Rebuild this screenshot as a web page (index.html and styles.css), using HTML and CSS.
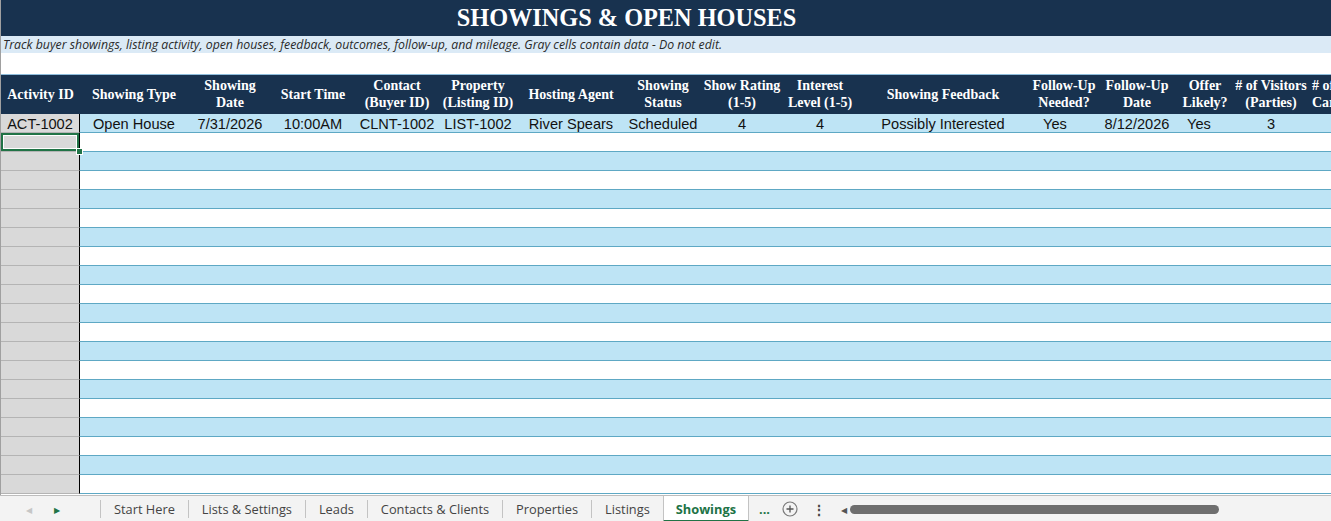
FILE: index.html
```html
<!DOCTYPE html>
<html lang="en">

<head>
    <meta charset="UTF-8">
    <title>Showings &amp; Open Houses</title>
    <link rel="stylesheet" href="styles.css">
</head>

<body>
    <div class="window">
        <div class="sheet">
            <div class="title">SHOWINGS &amp; OPEN HOUSES</div>
            <div class="subtitle">Track buyer showings, listing activity, open houses, feedback, outcomes, follow-up, and mileage. Gray cells contain data - Do not edit.</div>
            <div class="spacer"></div>

            <table class="grid">
                <colgroup>
                    <col style="width:79px">
                    <col style="width:108px">
                    <col style="width:84px">
                    <col style="width:82px">
                    <col style="width:86px">
                    <col style="width:76px">
                    <col style="width:110px">
                    <col style="width:74px">
                    <col style="width:84px">
                    <col style="width:72px">
                    <col style="width:174px">
                    <col style="width:68px">
                    <col style="width:78px">
                    <col style="width:58px">
                    <col style="width:74px">
                    <col style="width:80px">
                </colgroup>
                <thead>
                    <tr>
                        <th>Activity ID</th>
                        <th>Showing Type</th>
                        <th>Showing<br>Date</th>
                        <th>Start Time</th>
                        <th>Contact<br>(Buyer ID)</th>
                        <th>Property<br>(Listing ID)</th>
                        <th>Hosting Agent</th>
                        <th>Showing<br>Status</th>
                        <th>Show Rating<br>(1-5)</th>
                        <th>Interest<br>Level (1-5)</th>
                        <th>Showing Feedback</th>
                        <th>Follow-Up<br>Needed?</th>
                        <th>Follow-Up<br>Date</th>
                        <th>Offer<br>Likely?</th>
                        <th># of Visitors<br>(Parties)</th>
                        <th class="cut"># of<br>Cars</th>
                    </tr>
                </thead>
                <tbody id="rows">
                    <tr class="band">
                        <td class="locked">ACT-1002</td>
                        <td>Open House</td>
                        <td>7/31/2026</td>
                        <td>10:00AM</td>
                        <td>CLNT-1002</td>
                        <td>LIST-1002</td>
                        <td>River Spears</td>
                        <td>Scheduled</td>
                        <td>4</td>
                        <td>4</td>
                        <td>Possibly Interested</td>
                        <td class="yes-a">Yes</td>
                        <td>8/12/2026</td>
                        <td class="yes-b">Yes</td>
                        <td>3</td>
                        <td></td>
                    </tr>
                    <tr>
                        <td class="locked selected"><span class="handle"></span></td>
                        <td></td><td></td><td></td><td></td><td></td><td></td><td></td>
                        <td></td><td></td><td></td><td></td><td></td><td></td><td></td><td></td>
                    </tr>
                </tbody>
            </table>
        </div>

        <div class="tabbar">
            <div class="nav">
                <span class="arrow off">&#9664;</span>
                <span class="arrow on">&#9654;</span>
            </div>
            <div class="tab">Start Here</div>
            <div class="tab">Lists &amp; Settings</div>
            <div class="tab">Leads</div>
            <div class="tab">Contacts &amp; Clients</div>
            <div class="tab">Properties</div>
            <div class="tab">Listings</div>
            <div class="tab active">Showings</div>
            <div class="more">...</div>
            <div class="add">
                <svg width="16" height="16" viewBox="0 0 16 16">
                    <circle cx="8" cy="8" r="7" fill="none" stroke="#7a7a7a" stroke-width="1.2"/>
                    <path d="M8 4.5v7M4.5 8h7" stroke="#555" stroke-width="1.3"/>
                </svg>
            </div>
            <div class="dots">&#8942;</div>
            <div class="hscroll">
                <span class="left">&#9664;</span>
                <span class="thumb"></span>
            </div>
        </div>
    </div>

    <script>
        // fill the empty banded rows below the first records
        const rows = document.getElementById('rows');
        for (let i = 0; i < 18; i++) {
            const tr = document.createElement('tr');
            if (i % 2 === 0) tr.classList.add('band');
            let cells = '<td class="locked"></td>';
            for (let c = 0; c < 15; c++) cells += '<td></td>';
            tr.innerHTML = cells;
            rows.appendChild(tr);
        }
    </script>
</body>

</html>
```

FILE: styles.css
```css
body {
    margin: 0;
    background-color: #ffffff;
    font-family: "Liberation Sans", Arial, sans-serif;
}

.window {
    width: 1331px;
    height: 521px;
    display: flex;
    flex-direction: column;
    overflow: hidden;
}

.sheet {
    height: 495px;
    flex-shrink: 0;
    overflow: hidden;
    border-left: 1px solid #a0a0a0;
}

.title {
    height: 36px;
    padding-right: 79px;
    background-color: #18324f;
    color: #ffffff;
    font-family: "Liberation Serif", "Times New Roman", serif;
    font-weight: bold;
    font-size: 24.3px;
    line-height: 36px;
    text-align: center;
}

.subtitle {
    height: 17px;
    background-color: #dbeaf6;
    color: #2a2a2a;
    font-family: "Open Sans", sans-serif;
    font-style: italic;
    font-size: 12.3px;
    line-height: 17px;
    padding-left: 2px;
    white-space: nowrap;
}

.spacer {
    height: 21px;
}

.grid {
    border-collapse: separate;
    border-spacing: 0;
    table-layout: fixed;
    width: 1387px;
}

.grid th {
    height: 40px;
    padding: 0;
    background-color: #18324f;
    color: #ffffff;
    box-shadow: inset 0 1px 0 #8fbddb;
    font-family: "Liberation Serif", "Times New Roman", serif;
    font-weight: bold;
    font-size: 14px;
    line-height: 17px;
    text-align: center;
    white-space: nowrap;
    overflow: hidden;
}

.grid th.cut {
    text-align: left;
    padding-left: 4px;
}

.grid td {
    height: 15px;
    padding: 3px 0 0;
    border-bottom: 1px solid #5ea8c4;
    font-size: 14.6px;
    line-height: 15px;
    color: #111111;
    text-align: center;
    white-space: nowrap;
    overflow: hidden;
}

.grid tr.band td {
    background-color: #bee4f5;
}

.grid td.yes-a {
    text-align: left;
    padding-left: 13px;
}

.grid td.yes-b {
    text-align: left;
    padding-left: 11px;
}

.grid td.locked,
.grid tr.band td.locked {
    background-color: #d9d9d9;
    border-bottom: 1px solid #b4b4b4;
    border-right: 1px solid #000000;
}

.grid td.selected {
    position: relative;
    box-shadow: inset 0 0 0 2px #217346, inset 0 0 0 3px #ffffff;
    overflow: visible;
}

.handle {
    position: absolute;
    right: -4px;
    bottom: -4px;
    width: 5px;
    height: 5px;
    background-color: #217346;
    border: 1px solid #ffffff;
}

/* sheet tabs */
.tabbar {
    flex: 1;
    display: flex;
    align-items: stretch;
    background-color: #f3f3f3;
    border-top: 1px solid #bdbdbd;
    font-family: "Open Sans", sans-serif;
    font-size: 12.8px;
    color: #444444;
}

.nav {
    width: 100px;
    display: flex;
    align-items: center;
    border-right: 1px solid #c3c3c3;
    margin: 4px 0;
}

.arrow {
    font-size: 8px;
    margin-left: 26px;
}

.arrow.off {
    color: #c6c6c6;
}

.arrow.on {
    color: #217346;
    margin-left: 22px;
}

.tab {
    display: flex;
    align-items: center;
    padding: 1px 13px 0;
    border-right: 1px solid #c3c3c3;
    margin: 4px 0;
    line-height: 17px;
}

.tab.active {
    margin: 0 0 0 -1px;
    background-color: #ffffff;
    color: #217346;
    font-weight: bold;
    border-left: 1px solid #c3c3c3;
    border-bottom: 2px solid #217346;
    padding: 3px 12px 0;
}

.more {
    display: flex;
    align-items: center;
    padding: 0 7px 0 10px;
    color: #217346;
    font-weight: bold;
}

.add {
    display: flex;
    align-items: center;
    padding: 0 5px;
}

.dots {
    display: flex;
    align-items: center;
    padding: 0 7px 0 9px;
    font-size: 14px;
    font-weight: bold;
    color: #444444;
}

.hscroll {
    display: flex;
    align-items: center;
    padding-left: 8px;
}

.hscroll .left {
    font-size: 8px;
    color: #555555;
    margin-right: 3px;
}

.hscroll .thumb {
    width: 369px;
    height: 9px;
    border-radius: 5px;
    background-color: #6e6e6e;
}
```
